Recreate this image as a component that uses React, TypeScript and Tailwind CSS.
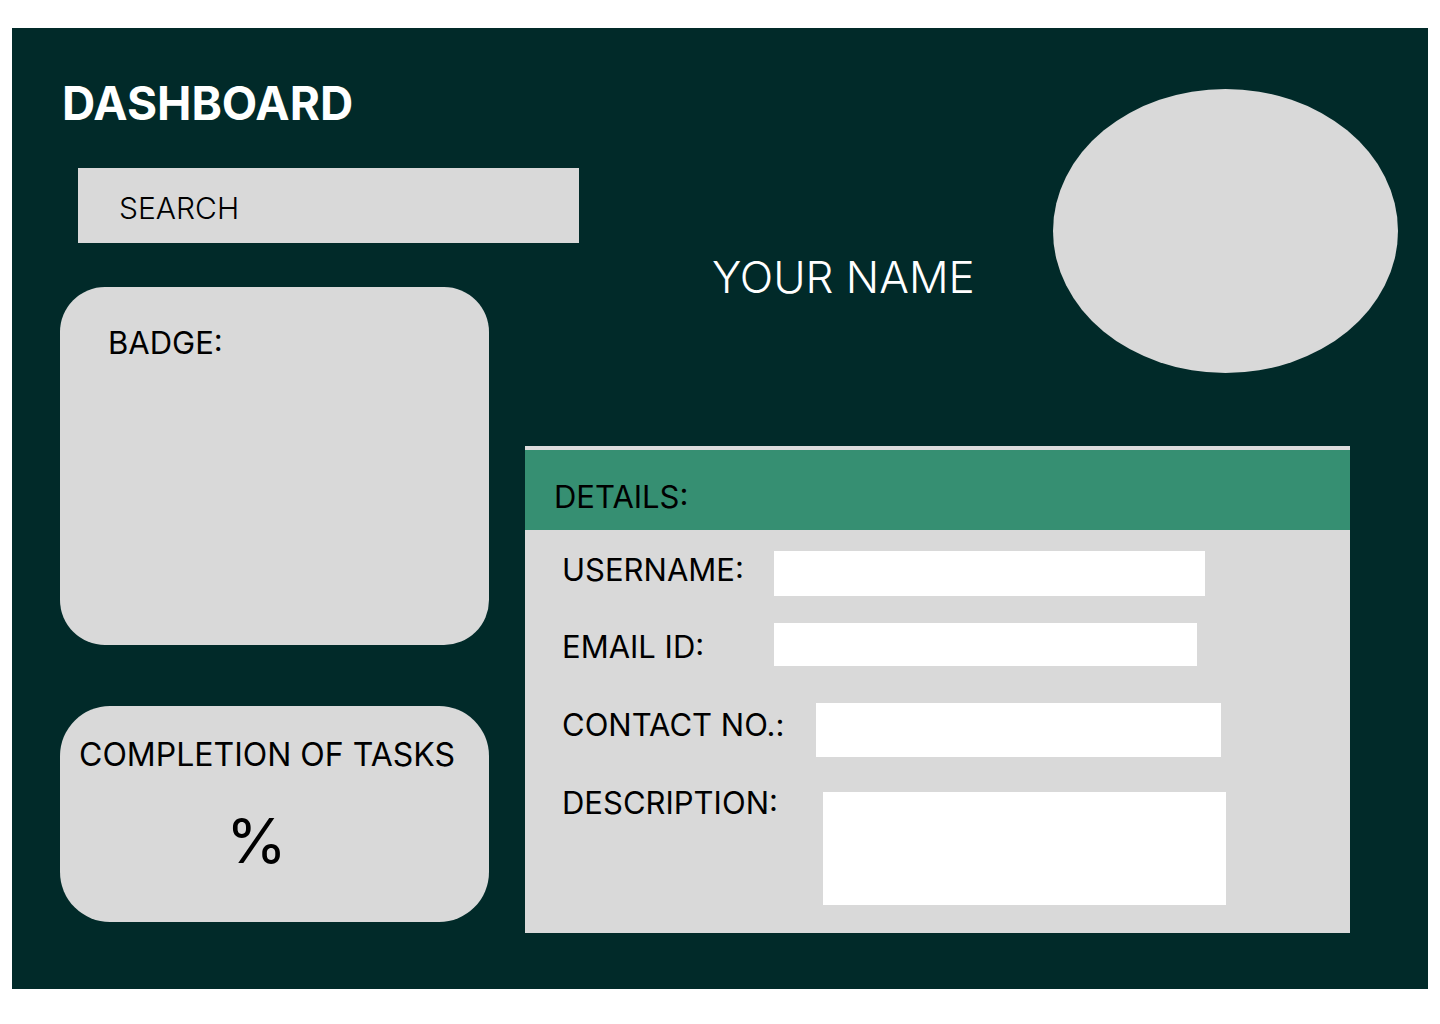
export default function App() {
  const font = { fontFamily: 'Inter, "Noto Sans", sans-serif' };

  return (
    <div className="min-h-screen bg-white pt-[28px] pl-[12px]" style={font}>
      <div className="flex w-[1416px] h-[961px] bg-[#012a29]">
        {/* left column */}
        <div className="flex flex-col pl-[48px] w-[477px] shrink-0">
          <h1 className="ml-[2px] mt-[52px] text-[46px] leading-none font-bold text-white">DASHBOARD</h1>
          <div className="mt-[42px] ml-[18px] w-[501px] h-[75px] bg-[#d9d9d9] pl-[41px] pt-[25px]">
            <span className="text-[30px] leading-none font-light text-black">SEARCH</span>
          </div>
          <div className="mt-[44px] w-[429px] h-[358px] rounded-[45px] bg-[#d9d9d9] pl-[48px] pt-[40px]">
            <p className="text-[31px] leading-none text-black">BADGE:</p>
          </div>
          <div className="mt-[61px] w-[429px] h-[216px] rounded-[50px] bg-[#d9d9d9] pl-[19px] pt-[33px]">
            <p className="text-[32px] leading-none text-black">COMPLETION OF TASKS</p>
            <p className="mt-[39px] pl-[147px] text-[62px] leading-none text-black">%</p>
          </div>
        </div>

        {/* right column */}
        <div className="flex flex-col flex-1">
          <div className="flex items-start">
            <p className="ml-[223px] mt-[227px] text-[44px] leading-none font-light text-white">YOUR NAME</p>
            <div className="ml-auto mr-[30px] mt-[61px] w-[345px] h-[284px] rounded-[50%] bg-[#d9d9d9]" />
          </div>

          <div className="mt-[73px] ml-[36px] w-[825px] h-[487px] bg-[#d9d9d9] border-t-4 border-[#dcdcdc] flex flex-col">
            <div className="h-[80px] bg-[#368f72] pl-[29px] pt-[31px]">
              <p className="text-[31px] leading-none text-black">DETAILS:</p>
            </div>
            <div className="flex flex-col pl-[37px] pt-[21px]">
              <div className="flex items-start">
                <span className="w-[212px] mt-[3px] text-[31px] leading-none text-black">USERNAME:</span>
                <div className="w-[431px] h-[45px] bg-white" />
              </div>
              <div className="flex items-start mt-[27px]">
                <span className="w-[212px] mt-[8px] text-[31px] leading-none text-black">EMAIL ID:</span>
                <div className="w-[423px] h-[43px] bg-white" />
              </div>
              <div className="flex items-start mt-[37px]">
                <span className="w-[254px] mt-[6px] text-[31px] leading-none text-black">CONTACT NO.:</span>
                <div className="w-[405px] h-[54px] bg-white" />
              </div>
              <div className="flex items-start mt-[35px]">
                <span className="w-[261px] -mt-[5px] text-[31px] leading-none text-black">DESCRIPTION:</span>
                <div className="w-[403px] h-[113px] bg-white" />
              </div>
            </div>
          </div>
        </div>
      </div>
    </div>
  );
}
